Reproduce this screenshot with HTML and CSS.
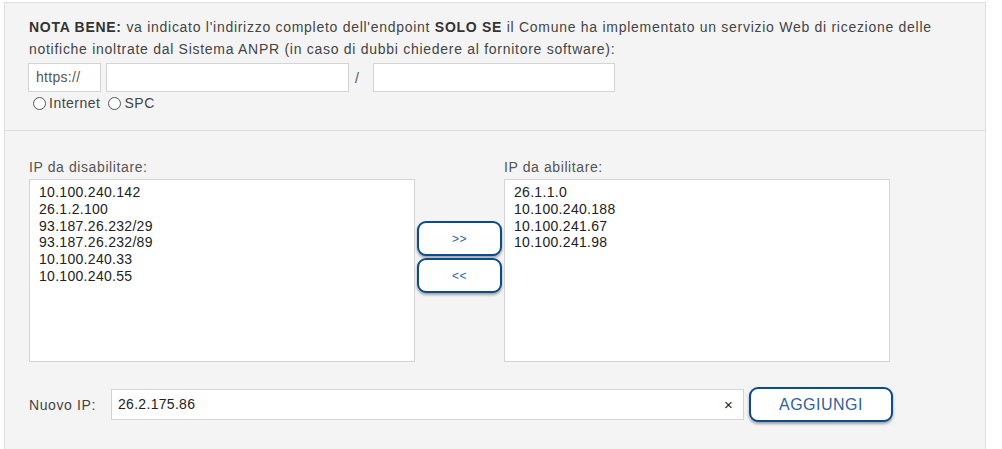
FILE: index.html
```html
<!DOCTYPE html>
<html lang="it">
<head>
<meta charset="utf-8">
<title>Endpoint e IP</title>
<link rel="stylesheet" href="styles.css">
</head>
<body>
<div class="panel">
  <div class="section note">
    <p class="note-text"><b>NOTA BENE:</b> va indicato l'indirizzo completo dell'endpoint <b>SOLO SE</b> il Comune ha implementato un servizio Web di ricezione delle notifiche inoltrate dal Sistema ANPR (in caso di dubbi chiedere al fornitore software):</p>
    <div class="url-row">
      <div class="field proto">https://</div>
      <div class="field host"></div>
      <span class="slash">/</span>
      <div class="field path"></div>
    </div>
    <div class="radio-row">
      <label class="radio"><span class="dot"></span>Internet</label>
      <label class="radio"><span class="dot"></span>SPC</label>
    </div>
  </div>
  <div class="section ips">
    <div class="lists">
      <div class="list-col">
        <div class="list-label">IP da disabilitare:</div>
        <div class="listbox">
          <div class="opt">10.100.240.142</div>
          <div class="opt">26.1.2.100</div>
          <div class="opt">93.187.26.232/29</div>
          <div class="opt">93.187.26.232/89</div>
          <div class="opt">10.100.240.33</div>
          <div class="opt">10.100.240.55</div>
        </div>
      </div>
      <div class="move-btns">
        <button class="btn move">&gt;&gt;</button>
        <button class="btn move">&lt;&lt;</button>
      </div>
      <div class="list-col">
        <div class="list-label">IP da abilitare:</div>
        <div class="listbox">
          <div class="opt">26.1.1.0</div>
          <div class="opt">10.100.240.188</div>
          <div class="opt">10.100.241.67</div>
          <div class="opt">10.100.241.98</div>
        </div>
      </div>
    </div>
    <div class="add-row">
      <span class="add-label">Nuovo IP:</span>
      <div class="add-input">26.2.175.86<span class="clear">&#215;</span></div>
      <button class="btn add">AGGIUNGI</button>
    </div>
  </div>
</div>
</body>
</html>
```
FILE: styles.css
```css
html, body {
  margin: 0;
  padding: 0;
  background: #ffffff;
}
body {
  font-family: "Liberation Sans", Arial, sans-serif;
  font-size: 14px;
  color: #444;
  letter-spacing: 0.72px;
}
.panel {
  margin: 2px 0 0 4px;
  width: 980px;
  border: 1px solid #dedede;
  border-bottom: none;
  background: #f4f4f4;
}
.section {
  padding-left: 24px;
  padding-right: 24px;
}
.note {
  padding-top: 13px;
  padding-bottom: 17px;
  border-bottom: 1px solid #dedede;
}
.note-text {
  margin: 0;
  line-height: 22px;
  color: #444;
}
.note-text b {
  color: #333;
}
.url-row {
  display: flex;
  align-items: center;
  margin-top: 3px;
  margin-left: -1px;
  height: 29px;
}
.field {
  box-sizing: border-box;
  height: 29px;
  border: 1px solid #d4d4d4;
  background: #fff;
  line-height: 27px;
  color: #555;
  letter-spacing: 0.3px;
}
.proto {
  width: 73px;
  padding-left: 7px;
}
.host {
  width: 243px;
  margin-left: 5px;
}
.slash {
  width: 24px;
  text-align: left;
  color: #555;
  padding-left: 6px;
  box-sizing: border-box;
}
.path {
  width: 242px;
}
.radio-row {
  display: flex;
  gap: 8px;
  margin-top: 2px;
  margin-left: 4px;
  line-height: 19px;
  color: #444;
  letter-spacing: 0.5px;
}
.radio {
  display: flex;
  align-items: center;
}
.dot {
  width: 11px;
  height: 11px;
  border: 1px solid #555;
  border-radius: 50%;
  background: #fff;
  margin-right: 3px;
}
.ips {
  padding-top: 28px;
  padding-bottom: 30px;
}
.lists {
  display: flex;
  gap: 2px;
}
.list-col {
  display: flex;
  flex-direction: column;
}
.list-label {
  line-height: 16px;
  margin-bottom: 4px;
  color: #555;
  letter-spacing: 0.6px;
}
.listbox {
  box-sizing: border-box;
  width: 386px;
  height: 183px;
  border: 1px solid #d4d4d4;
  background: #fff;
  padding: 4px 9px;
  color: #222;
  letter-spacing: 0.3px;
}
.opt {
  line-height: 16.8px;
}
.move-btns {
  display: flex;
  flex-direction: column;
  gap: 2px;
  padding-top: 62px;
}
.btn {
  font-family: "Liberation Sans", Arial, sans-serif;
  background: #fff;
  border: 2px solid #0d4c8c;
  border-radius: 9px;
  box-shadow: 0 2px 3px rgba(0, 0, 0, 0.35);
  color: #2f5f9e;
  cursor: pointer;
  padding: 0;
}
.move {
  width: 85px;
  height: 35px;
  font-size: 12px;
  letter-spacing: 0.5px;
}
.add-row {
  display: flex;
  align-items: center;
  margin-top: 25px;
}
.add-label {
  width: 82px;
  color: #444;
  letter-spacing: 0.6px;
}
.add-input {
  position: relative;
  box-sizing: border-box;
  width: 633px;
  height: 31px;
  border: 1px solid #d4d4d4;
  background: #fff;
  padding-left: 6px;
  line-height: 29px;
  color: #222;
  letter-spacing: 0.3px;
}
.clear {
  position: absolute;
  right: 10px;
  top: 0;
  font-size: 15px;
  color: #222;
}
.add {
  margin-left: 5px;
  width: 144px;
  height: 35px;
  font-size: 16px;
  letter-spacing: 0.5px;
}
```
